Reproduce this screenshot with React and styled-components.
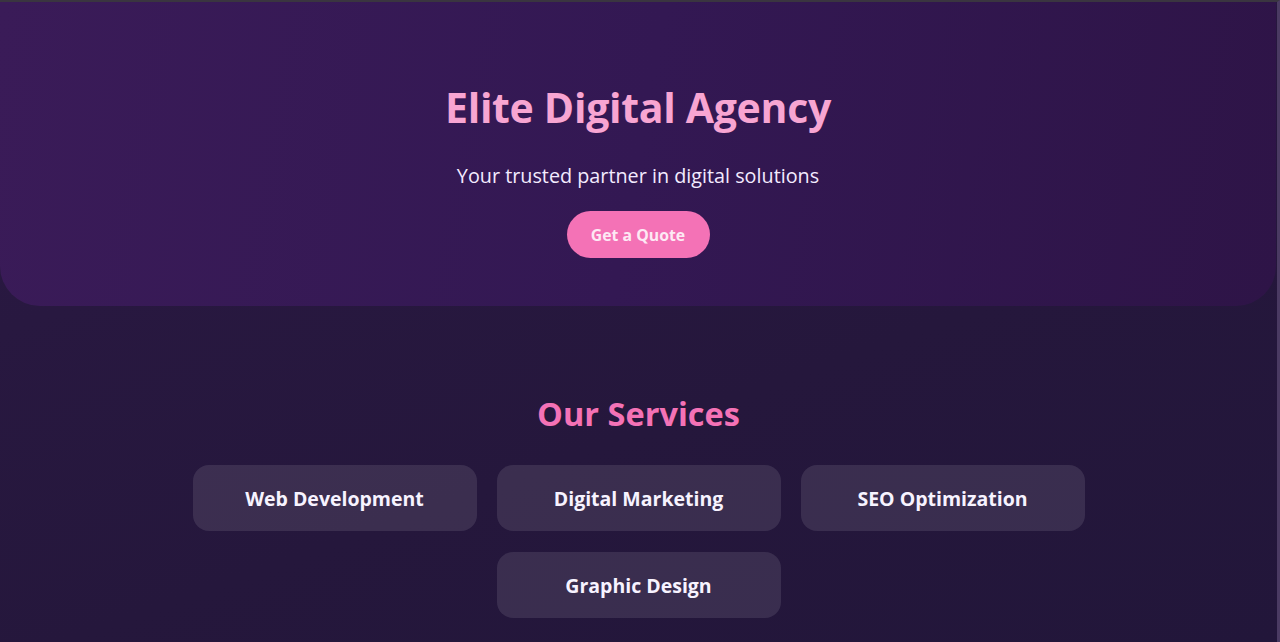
import React from "react"
import styled, { createGlobalStyle } from "styled-components"

const GlobalStyle = createGlobalStyle`
  * { box-sizing: border-box; }
  html, body {
    margin: 0;
    padding: 0;
    height: 100%;
  }
  body {
    font-family: "Open Sans", "Noto Sans", sans-serif;
    background: linear-gradient(160deg, #2b1944 0%, #25173c 60%, #22163a 100%);
    color: #f5f0ff;
    overflow: hidden;
  }
`

const Page = styled.div`
  min-height: 642px;
  border-top: 2px solid #3a3540;
  border-right: 3px solid #4a3a62;
`

const Hero = styled.header`
  height: 304px;
  padding-top: 77px;
  text-align: center;
  background: linear-gradient(100deg, #3a1b58 0%, #331853 50%, #2e1447 100%);
  border-radius: 0 0 40px 40px;
  margin-right: 1px;
  h1 {
    margin: 0;
    font-size: 41px;
    font-weight: 700;
    line-height: 56px;
    color: #f8a5d2;
    letter-spacing: -0.3px;
  }
  p {
    margin: 27px 0 0;
    font-size: 19.8px;
    line-height: 28px;
    color: #f3ebff;
  }
`

const QuoteButton = styled.button`
  margin-top: 21px;
  width: 143px;
  height: 47px;
  border: none;
  border-radius: 24px;
  background: #f472b6;
  color: #fde9f4;
  font-family: inherit;
  font-size: 15.8px;
  font-weight: 700;
  cursor: pointer;
`

const Services = styled.section`
  padding-top: 86px;
  text-align: center;
  h2 {
    margin: 0;
    font-size: 32.5px;
    font-weight: 700;
    line-height: 44px;
    color: #f472b6;
  }
`

const CardList = styled.div`
  margin: 29px auto 0;
  width: 900px;
  display: flex;
  flex-wrap: wrap;
  justify-content: center;
  gap: 21px 20px;
`

const Card = styled.div`
  width: 284px;
  height: 66px;
  border-radius: 16px;
  background: rgba(255, 255, 255, 0.1);
  display: flex;
  align-items: center;
  justify-content: center;
  font-size: 19.5px;
  font-weight: 700;
  color: #f7f3ff;
`

const services = ["Web Development", "Digital Marketing", "SEO Optimization", "Graphic Design"]

export default function App() {
  return (
    <Page>
      <GlobalStyle />
      <Hero>
        <h1>Elite Digital Agency</h1>
        <p>Your trusted partner in digital solutions</p>
        <QuoteButton>Get a Quote</QuoteButton>
      </Hero>
      <Services>
        <h2>Our Services</h2>
        <CardList>
          {services.map((s) => (
            <Card key={s}>{s}</Card>
          ))}
        </CardList>
      </Services>
    </Page>
  )
}
